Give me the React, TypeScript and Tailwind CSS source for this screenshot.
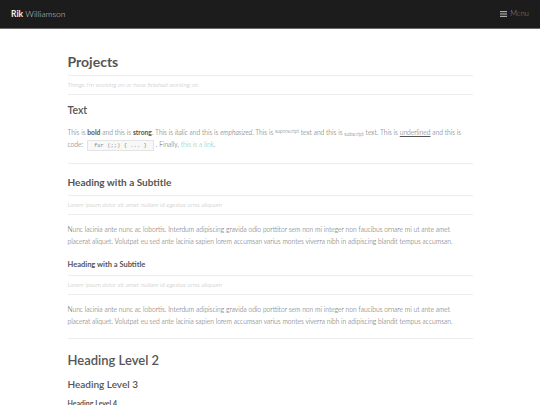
import React from "react";

const font = { fontFamily: "Lato, 'Noto Sans', sans-serif" };

function Rule() {
  return <div className="h-px bg-[#ececec]" />;
}

export default function App() {
  return (
    <div className="min-h-[405px] bg-white text-[#555]" style={font}>
      <div className="flex h-[29px] items-center justify-between border-b border-[#6b6b6b] bg-[#1c1c1c] px-[11px]">
        <div className="text-[8.5px] text-[#d0d0d0]">
          <span className="font-bold text-[#f0f0f0]">Rik</span>{" "}
          <span className="font-light">Williamson</span>
        </div>
        <div className="flex items-center gap-[3px] text-[7.5px] font-light text-[#8a8a8a]">
          <svg width="7" height="6" viewBox="0 0 7 6">
            <rect x="0" y="0" width="7" height="1.2" fill="#aaa" />
            <rect x="0" y="2.4" width="7" height="1.2" fill="#aaa" />
            <rect x="0" y="4.8" width="7" height="1.2" fill="#aaa" />
          </svg>
          <span>Menu</span>
        </div>
      </div>

      <div className="mx-auto w-[405px] pt-[24px]">
        <h1 className="pb-[4px] text-[14px] font-bold leading-[18px] text-[#555]">Projects</h1>
        <Rule />
        <p className="py-[5px] text-[6.5px] font-light italic leading-[8px] text-[#bbb]">
          Things I'm working on or have finished working on.
        </p>
        <Rule />

        <h3 className="pt-[9px] text-[10.5px] font-semibold leading-[12px] text-[#555]">Text</h3>
        <p className="pt-[10px] text-[6.7px] font-light leading-[12px] text-[#555]">
          This is <b className="font-bold text-[#555]">bold</b> and this is{" "}
          <strong className="font-bold text-[#555]">strong</strong>. This is <i>italic</i> and this is{" "}
          <em>emphasized</em>. This is <sup className="text-[5px]">superscript</sup> text and this is{" "}
          <sub className="text-[5px]">subscript</sub> text. This is <u>underlined</u> and this is code:{" "}
          <code
            className="mx-[2px] inline-block border border-[#e4e4e4] bg-[#f8f8f8] px-[6px] text-[5.5px] leading-[9px] text-[#888]"
            style={{ fontFamily: "'Liberation Mono', monospace" }}
          >
            for (;;) {"{"} ... {"}"}
          </code>
          . Finally, <a className="text-[#6cc4b0]">this is a link</a>.
        </p>
        <div className="pt-[12px]" />
        <Rule />

        <h2 className="pt-[12px] pb-[7px] text-[10px] font-bold leading-[12px] text-[#555]">Heading with a Subtitle</h2>
        <Rule />
        <p className="py-[5px] text-[6.5px] font-light italic leading-[8px] text-[#bbb]">
          Lorem ipsum dolor sit amet nullam id egestas urna aliquam
        </p>
        <Rule />
        <p className="pt-[8px] text-[6.7px] font-light leading-[12px] text-[#555]">
          Nunc lacinia ante nunc ac lobortis. Interdum adipiscing gravida odio porttitor sem non mi integer non faucibus ornare mi ut ante amet placerat aliquet. Volutpat eu sed ante lacinia sapien lorem accumsan varius montes viverra nibh in adipiscing blandit tempus accumsan.
        </p>

        <h4 className="pt-[13px] pb-[5px] text-[7.5px] font-bold leading-[10px] text-[#555]">Heading with a Subtitle</h4>
        <Rule />
        <p className="py-[5px] text-[6.5px] font-light italic leading-[8px] text-[#bbb]">
          Lorem ipsum dolor sit amet nullam id egestas urna aliquam
        </p>
        <Rule />
        <p className="pt-[8px] text-[6.7px] font-light leading-[12px] text-[#555]">
          Nunc lacinia ante nunc ac lobortis. Interdum adipiscing gravida odio porttitor sem non mi integer non faucibus ornare mi ut ante amet placerat aliquet. Volutpat eu sed ante lacinia sapien lorem accumsan varius montes viverra nibh in adipiscing blandit tempus accumsan.
        </p>
        <div className="pt-[11px]" />
        <Rule />

        <h2 className="pt-[12px] text-[13px] font-semibold leading-[18px] text-[#555]">Heading Level 2</h2>
        <h3 className="pt-[9px] text-[10px] font-semibold leading-[12px] text-[#555]">Heading Level 3</h3>
        <h4 className="pt-[9px] text-[7px] font-bold leading-[9px] text-[#555]">Heading Level 4</h4>
      </div>
    </div>
  );
}
